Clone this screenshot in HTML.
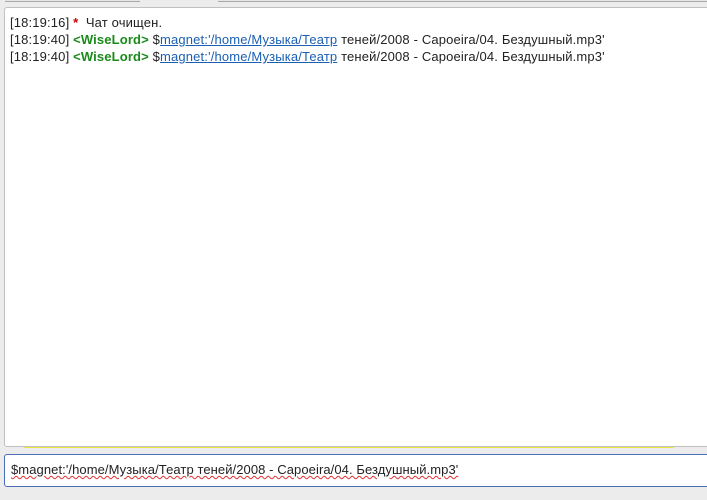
<!DOCTYPE html>
<html><head><meta charset="utf-8"><style>
html,body{margin:0;padding:0;width:707px;height:500px;background:#ececec;overflow:hidden;font-family:"Liberation Sans","DejaVu Sans",sans-serif;}
.tab{position:absolute;top:0;height:1px;background:#e6e6e6;border-bottom:1px solid #a8a8a8;}
.chat{position:absolute;left:4px;top:7px;width:710px;height:440px;background:#fff;border:1px solid #c0c0c0;border-radius:3px;box-sizing:border-box;}
.lines{position:absolute;left:5px;top:6px;font-size:13px;letter-spacing:0.15px;line-height:17px;color:#222;white-space:nowrap;}
.g{color:#1a8a1a;font-weight:bold;}
.r{color:#c00;font-weight:bold;}
a{color:#1a5fb4;text-decoration:underline;}
.yl{position:absolute;left:24px;top:447px;width:650px;height:1px;background:#e8e840;}
.inp{position:absolute;left:4px;top:454px;width:710px;height:33px;background:#fff;border:1px solid #4a6fb5;border-radius:3px;box-sizing:border-box;font-size:13px;letter-spacing:0.08px;color:#222;}
.inp span{position:absolute;left:6px;top:7px;text-decoration:underline wavy #e03030;text-decoration-thickness:1px;white-space:nowrap;}
</style></head><body>
<div class="tab" style="left:5px;width:135px;"></div>
<div class="tab" style="left:218px;width:489px;"></div>
<div class="chat"><div class="lines">
[18:19:16] <span class="r">*</span>&nbsp; Чат очищен.<br>
[18:19:40] <span class="g">&lt;WiseLord&gt;</span> $<a>magnet:'/home/Музыка/Театр</a> теней/2008 - Capoeira/04. Бездушный.mp3'<br>
[18:19:40] <span class="g">&lt;WiseLord&gt;</span> $<a>magnet:'/home/Музыка/Театр</a> теней/2008 - Capoeira/04. Бездушный.mp3'
</div></div>
<div class="yl"></div>
<div class="inp"><span>$magnet:'/home/Музыка/Театр теней/2008 - Capoeira/04. Бездушный.mp3'</span></div>
</body></html>
